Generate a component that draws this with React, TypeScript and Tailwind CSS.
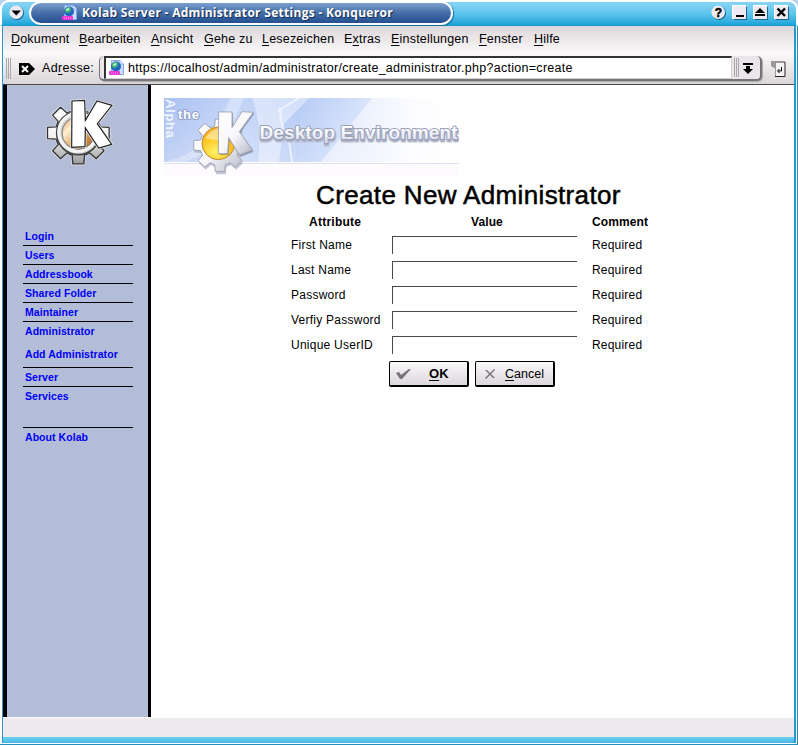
import React from "react";

type Hot = { pre?: string; key: string; post: string; cls: string };

const menu: Hot[] = [
  { key: "D", post: "okument", cls: "w-[68px] tracking-[0.18px]" },
  { key: "B", post: "earbeiten", cls: "w-[72px] tracking-[0.1px]" },
  { key: "A", post: "nsicht", cls: "w-[53px] tracking-[0.2px]" },
  { key: "G", post: "ehe zu", cls: "w-[58px] tracking-[0.2px]" },
  { key: "L", post: "esezeichen", cls: "w-[82px] tracking-[0.2px]" },
  { pre: "E", key: "x", post: "tras", cls: "w-[47px] tracking-[0.2px]" },
  { key: "E", post: "instellungen", cls: "w-[88px] tracking-[0.2px]" },
  { key: "F", post: "enster", cls: "w-[55px] tracking-[0.2px]" },
  { key: "H", post: "ilfe", cls: "w-[40px] tracking-[0.2px]" },
];

const links = [
  { text: "Login", cls: "h-[19px] border-b" },
  { text: "Users", cls: "h-[19px] border-b" },
  { text: "Addressbook", cls: "h-[19px] border-b" },
  { text: "Shared Folder", cls: "h-[19px] border-b" },
  { text: "Maintainer", cls: "h-[19px] border-b" },
  { text: "Administrator", cls: "h-[23px]" },
  { text: "Add Administrator", cls: "h-[23px] border-b" },
  { text: "Server", cls: "h-[19px] border-b" },
  { text: "Services", cls: "h-[41px] border-b" },
  { text: "About Kolab", cls: "h-[19px]" },
];

const fields = ["First Name", "Last Name", "Password", "Verfiy Password", "Unique UserID"];

function gearPath(cx: number, cy: number, inner: number, outer: number) {
  const pts: string[] = [];
  for (let i = 0; i < 8; i++) {
    const a = (i * Math.PI) / 4;
    const corners: [number, number][] = [
      [inner, -0.27],
      [outer, -0.18],
      [outer, 0.18],
      [inner, 0.27],
      [inner, 0.39],
    ];
    for (const [r, d] of corners) {
      pts.push(`${(cx + r * Math.cos(a + d)).toFixed(1)},${(cy + r * Math.sin(a + d)).toFixed(1)}`);
    }
  }
  return `M${pts.join("L")}Z`;
}

function KdeLogo() {
  return (
    <svg className="ml-[38px] mt-[14px] block h-[67px] w-[69px]" viewBox="135 45 207 201">
      <defs>
        <linearGradient id="steel" x1="0" y1="0" x2="0" y2="1">
          <stop offset="0" stopColor="#fff" />
          <stop offset=".55" stopColor="#f4f4f4" />
          <stop offset="1" stopColor="#9c9c9c" />
        </linearGradient>
        <linearGradient id="copper" x1="0" y1="0" x2="1" y2="1">
          <stop offset="0" stopColor="#d99a55" />
          <stop offset=".3" stopColor="#fff0d4" />
          <stop offset=".6" stopColor="#dfa15e" />
          <stop offset="1" stopColor="#a8590f" />
        </linearGradient>
      </defs>
      <path d={gearPath(235, 147, 69, 95)} fill="url(#steel)" stroke="#e9e9ee" strokeWidth="7" strokeLinejoin="round" />
      <path d={gearPath(235, 147, 69, 94)} fill="url(#steel)" stroke="#333" strokeWidth="4" strokeLinejoin="round" />
      <circle cx="235" cy="147" r="65" fill="#d5d5d5" stroke="#444" strokeWidth="5" />
      <circle cx="233" cy="145" r="57" fill="none" stroke="#f5f5f5" strokeWidth="9" />
      <circle cx="235" cy="147" r="49" fill="url(#copper)" stroke="#777" strokeWidth="3" />
      <path d="M256 109L291 51L336 64L292 119L335 181L296 192L256 132L255 188L215 190L216 51L254 49Z" fill="#fff" stroke="#e9e9ee" strokeWidth="8" />
      <path d="M256 109L291 51L336 64L292 119L335 181L296 192L256 132L255 188L215 190L216 51L254 49Z" fill="#fff" stroke="#222" strokeWidth="3.500" />
    </svg>
  );
}

function Banner() {
  return (
    <svg className="ml-[13px] mt-[13px] block h-[79px] w-[295px]" viewBox="0 0 295 79">
      <defs>
        <linearGradient id="sky" x1="0" y1="0" x2="1" y2="0">
          <stop offset="0" stopColor="#a9c0f1" />
          <stop offset=".25" stopColor="#c3d4f9" />
          <stop offset=".45" stopColor="#b4caf5" />
          <stop offset=".66" stopColor="#d3e0fb" />
          <stop offset=".85" stopColor="#f8f9ff" />
          <stop offset="1" stopColor="#fff" />
        </linearGradient>
        <linearGradient id="fade" x1="0" y1="0" x2="0" y2="1">
          <stop offset="0" stopColor="#fff" stopOpacity="0" />
          <stop offset="1" stopColor="#fff" stopOpacity=".3" />
        </linearGradient>
        <radialGradient id="amber" cx=".4" cy=".75" r=".8">
          <stop offset="0" stopColor="#fff36a" />
          <stop offset=".5" stopColor="#ffc928" />
          <stop offset="1" stopColor="#f0a018" />
        </radialGradient>
        <linearGradient id="silver" x1="0" y1="0" x2="1" y2="1">
          <stop offset="0" stopColor="#fff" />
          <stop offset=".5" stopColor="#f8f8fc" />
          <stop offset="1" stopColor="#b2b3c3" />
        </linearGradient>
        <linearGradient id="letters" x1="0" y1="0" x2="0" y2="1">
          <stop offset=".35" stopColor="#fff" />
          <stop offset="1" stopColor="#d5d9ec" />
        </linearGradient>
      </defs>
      <rect width="295" height="64" fill="url(#sky)" />
      <path d="M0 64Q48 53 62 10L66 0H80Q60 52 20 64Z" fill="#fff" opacity=".3" />
      <path d="M91 0H145L120 26L115 64H94Q99 30 88 0Z" fill="#edf3ff" opacity=".55" />
      <path d="M208 0H295V64H157Z" fill="#fff" opacity=".5" />
      <path d="M116 10Q116 30 125 42L128 64M114 13L135 0" stroke="#fff" strokeWidth="2" fill="none" opacity=".6" />
      <rect width="295" height="64" fill="url(#fade)" />
      <path d="M0 64.5H295" stroke="#fff" />
      <path d="M0 65.5H295" stroke="#dfe2f3" />
      <rect y="66" width="295" height="13" fill="#fefbff" />
      <text transform="translate(1.5 1) rotate(90)" fill="#f1f5ff" fontFamily="Liberation Sans, sans-serif" fontSize="13.5" fontWeight="700" textLength="39">Alpha</text>
      <g fontFamily="Liberation Sans, sans-serif" fontWeight="700" strokeLinejoin="round" paintOrder="stroke">
        <text x="14" y="21" fill="#fff" stroke="#8fa3cc" strokeWidth="2" fontSize="13" textLength="21">the</text>
        <text x="96" y="42.5" fill="#a2a6bc" stroke="#b8bccd" strokeWidth="3" fontSize="19" textLength="198">Desktop Environment</text>
        <text x="95.5" y="41" fill="url(#letters)" stroke="#9aa1ba" strokeWidth="2" fontSize="19" textLength="198">Desktop Environment</text>
      </g>
      <g transform="translate(-8 -8) scale(.33333)">
        <path d={gearPath(195, 173, 60, 81)} fill="#8288a0" opacity=".45" />
        <path d={gearPath(192, 166, 60, 80)} fill="url(#silver)" stroke="#a1a4b5" strokeWidth="3" strokeLinejoin="round" />
        <circle cx="187" cy="160" r="49" fill="url(#amber)" stroke="#b78b43" strokeWidth="3" />
        <path d="M148 145Q187 85 228 145Q185 155 148 145Z" fill="#fff5c4" opacity=".6" />
        <path d="M232 119L260 69L296 70L253 129L293 186L253 201L221 150L218 195L191 195L191 70L231 70Z" fill="#74798e" opacity=".6" />
        <path d="M228 113L258 65L292 67L250 125L290 180L250 195L218 143L215 191L187 191L188 66L228 66Z" fill="url(#silver)" stroke="#9a9cad" strokeWidth="2.5" />
      </g>
    </svg>
  );
}

function PageIcon() {
  return (
    <svg className="block h-4 w-[15px] shrink-0" viewBox="0 0 15 16">
      <path d="M2.500 .5H11L14.500 4V14.500H2.500Z" fill="#c9defc" stroke="#82aaf0" />
      <path d="M11 .5V4H14.500" fill="#fff" stroke="#82aaf0" />
      <circle cx="7" cy="6.500" r="5" fill="#2863c4" />
      <path d="M3 4Q6 .5 9 3L9 6L6 8L3 7Z" fill="#3fb86d" />
      <path d="M4 4L7 3V5L5 6Z" fill="#c8ffd8" />
      <rect x="0" y="11" width="11" height="4" rx="1" fill="#ed38d4" />
      <path d="M2 13H9" stroke="#ff9bf0" strokeDasharray="1 1" />
    </svg>
  );
}

function TitleButton({ kind }: { kind: "menu" | "help" | "min" | "max" | "close" }) {
  const round = kind === "menu" || kind === "help";
  return (
    <svg className="block size-[15px] shrink-0" viewBox="0 0 15 15">
      {round ? (
        <>
          <circle cx="8" cy="8" r="7" fill="#176991" />
          <circle cx="7.200" cy="7.200" r="6.800" fill="#edeaf2" />
        </>
      ) : (
        <>
          <path d="M2 2H15V15H2Z" fill="#176991" />
          <path d="M0 0H14V14H0Z" fill="#edeaf2" />
          <path d="M.5 13.500V.5H13.500" fill="none" stroke="#fff" />
        </>
      )}
      {kind === "menu" && <path d="M2.500 5.500H12L7.300 10.500Z" fill="#000" />}
      {kind === "help" && (
        <text x="7.300" y="11.500" textAnchor="middle" fontFamily="Liberation Sans, sans-serif" fontWeight="700" fontSize="12" stroke="#000" strokeWidth=".5">?</text>
      )}
      {kind === "min" && <path d="M4 10H12V12H4Z" fill="#000" />}
      {kind === "max" && <path d="M2 8L7 3L12 8ZM2 9H12V11H2Z" fill="#000" />}
      {kind === "close" && <path d="M3.500 3.500L11 11M11 3.500L3.500 11" stroke="#000" strokeWidth="2.400" />}
    </svg>
  );
}

function Grip({ cls }: { cls: string }) {
  return (
    <div className={`flex shrink-0 gap-[1px] ${cls}`}>
      <i className="w-px bg-[#aaa6aa]" />
      <i className="w-px bg-[#aaa6aa]" />
      <i className="w-px bg-[#aaa6aa]" />
    </div>
  );
}

export default function App() {
  return (
    <div className="flex h-[745px] w-[798px] flex-col overflow-hidden bg-white font-['Liberation_Sans',Arial,sans-serif] text-black">
      <header className="flex h-[26px] shrink-0 rounded-t-[9px] border-l-2 border-r-2 border-t-2 border-b border-t-white border-r-white border-b-[#1b9bcb] border-l-white bg-linear-to-b from-[#82d2f3] from-10% via-[#5dc5ec] to-[#16a3d9] shadow-[0_0_0_12px_#b9d4f1]">
        <div className="ml-[7px] mt-[3px] w-[20px]">
          <TitleButton kind="menu" />
        </div>
        <div className="-mt-px flex h-[24px] w-[424px] items-center rounded-full border-2 border-white bg-linear-to-b from-[#7b9fd0] via-[#456fa8] to-[#244f90] shadow-[1px_1px_1px_#176991]">
          <div className="ml-[31px]">
            <PageIcon />
          </div>
          <h1 className="ml-[5px] whitespace-nowrap font-['Open_Sans',sans-serif] text-[12px] font-bold leading-5 tracking-[0.3px] text-white [text-shadow:1px_1px_1px_#112b55]">
            Kolab Server - Administrator Settings - Konqueror
          </h1>
        </div>
        <div className="ml-auto mr-[7px] mt-[3px] flex gap-[6px]">
          <TitleButton kind="help" />
          <TitleButton kind="min" />
          <TitleButton kind="max" />
          <TitleButton kind="close" />
        </div>
      </header>

      <div className="flex min-h-0 flex-1 border-b border-b-[#278fbb]">
        <div className="flex min-w-0 flex-1 flex-col border-l-2 border-b border-l-white border-b-white">
          <div className="flex min-h-0 flex-1 flex-col border-r-2 border-l border-[#2b98c8]">
            <nav className="flex h-[27px] shrink-0 bg-linear-to-b from-[#dcd7da] to-[#fbf8fa] pl-2 text-[12.5px] leading-[26px]">
              {menu.map((m) => (
                <span key={m.key + m.post} className={`shrink-0 whitespace-nowrap ${m.cls}`}>
                  {m.pre}
                  <span className="underline underline-offset-2">{m.key}</span>
                  {m.post}
                </span>
              ))}
            </nav>
            <div className="flex h-[32px] shrink-0 items-center border-b border-[#4b4949] bg-linear-to-b from-[#fbf8fa] to-[#dad6d9]">
              <Grip cls="ml-[3px] h-[21px]" />
              <svg className="ml-[8px] h-3 w-[16px]" viewBox="0 0 16 12">
                <path d="M0 0H10L16 6L10 12H0Z" />
                <path d="M3 3L9 9M9 3L3 9" stroke="#fff" strokeWidth="2" />
              </svg>
              <span className="ml-[7px] w-[57px] text-[12.5px] tracking-[0.35px]">
                Ad<span className="underline underline-offset-2">r</span>esse:
              </span>
              <div className="flex h-[25px] w-[663px] rounded-[5px] border-r-2 border-b-2 border-l border-[#777377] bg-[#e9e5e8] shadow-[1px_1px_1px_#aaa]">
                <div className="ml-[4px] mt-0 flex h-[23px] w-[628px] items-center border-l-2 border-t-2 border-r border-b border-t-[#333] border-l-[#333] border-r-[#d5d1d4] border-b-[#d5d1d4] bg-white pl-[3px]">
                  <PageIcon />
                  <span className="ml-[4px] whitespace-nowrap text-[12.5px] tracking-[0.28px]">https://localhost/admin/administrator/create_administrator.php?action=create</span>
                </div>
                <Grip cls="ml-[2px] my-[2px]" />
                <svg className="ml-[4px] mt-[7px] h-[12px] w-[10px]" viewBox="0 0 10 12">
                  <path d="M0 0H10V2H0ZM3 3H7V6H10L5 11L0 6H3Z" />
                </svg>
              </div>
              <svg className="ml-[9px] h-[18px] w-[15px]" viewBox="0 0 15 18">
                <path d="M4 2H14V16H4Z" fill="#f7f4f7" />
                <path d="M0 1H14V3H5V8H3L0 6Z" fill="#9b989b" />
                <path d="M4.500 3V16" stroke="#9b989b" />
                <path d="M14 2V16.500H4" fill="none" stroke="#222" />
                <path d="M10.500 7V11H7M8.500 9L6.500 11L8.500 13" fill="none" stroke="#000" />
              </svg>
            </div>

            <main className="flex h-[632px] shrink-0 bg-white">
              <aside className="h-full w-[148px] shrink-0 border-l-4 border-r-3 border-black bg-[#b3bdd8]">
                <KdeLogo />
                <nav className="ml-[16px] mt-[61px] w-[110px] text-[10.5px] font-bold text-[#0000f5]">
                  {links.map((l) => (
                    <a key={l.text} className={`block border-black pl-[2px] leading-[19px] tracking-[0.06px] ${l.cls}`}>{l.text}</a>
                  ))}
                </nav>
              </aside>
              <section className="flex flex-1 flex-col">
                <Banner />
                <h2 className="ml-[165px] mt-[2px] h-[33px] whitespace-nowrap text-[26px] leading-[32px] tracking-[0.36px] [-webkit-text-stroke:0.5px_black]">Create New Administrator</h2>
                <div className="ml-[140px] grid w-[380px] grid-cols-[101px_200px_70px] text-[12px]">
                  <b className="h-[21px] pl-[18px] leading-[20px] tracking-[0.25px]">Attribute</b>
                  <b className="h-[21px] pl-[79px] leading-[20px] tracking-[0.1px]">Value</b>
                  <b className="h-[21px] leading-[20px] tracking-[0.1px]">Comment</b>
                  {fields.map((f) => (
                    <React.Fragment key={f}>
                      <label className="h-[25px] whitespace-nowrap leading-[25px] tracking-[0.25px]">{f}</label>
                      <input className="mt-[3px] h-[18px] w-[185px] border-l border-t border-[#494949] bg-white outline-none" />
                      <span className="leading-[25px] tracking-[0.2px]">Required</span>
                    </React.Fragment>
                  ))}
                </div>
                <div className="ml-[238px] mt-[3px] flex gap-[6px] text-[12.5px]">
                  <button className="flex h-[26px] w-[80px] items-center rounded-[2px] border border-b-2 border-r-2 border-black bg-linear-to-b from-[#fbf8fb] to-[#dcd7dc] pl-[6px] font-bold">
                    <svg className="h-[12px] w-[15px]" viewBox="0 0 15 12"><path d="M0 5L3 4L5 7L13 1L15 1L6 11L4 11Z" fill="#777378" /></svg>
                    <span className="ml-[18px] text-[13px]"><span className="underline underline-offset-2">O</span>K</span>
                  </button>
                  <button className="flex h-[26px] w-[80px] items-center rounded-[2px] border border-b-2 border-r-2 border-black bg-linear-to-b from-[#fbf8fb] to-[#dcd7dc] pl-[9px]">
                    <svg className="h-[10px] w-[10px]" viewBox="0 0 10 10"><path d="M0 1L2 1L5 4L9 0L10 1L6 5L10 9L8 9L5 6L1 10L0 9L4 5Z" fill="#777378" /></svg>
                    <span className="ml-[10px] pt-px"><span className="underline underline-offset-2">C</span>ancel</span>
                  </button>
                </div>
              </section>
            </main>
            <div className="mt-px h-[19px] shrink-0 bg-[#eeeaed]" />
            <div className="min-h-[6px] flex-1 bg-linear-to-b from-[#6fcdf0] to-[#43b9e7]" />
          </div>
        </div>
        <div className="w-[2px] border-l border-l-white bg-[#278fbb]" />
      </div>
    </div>
  );
}
